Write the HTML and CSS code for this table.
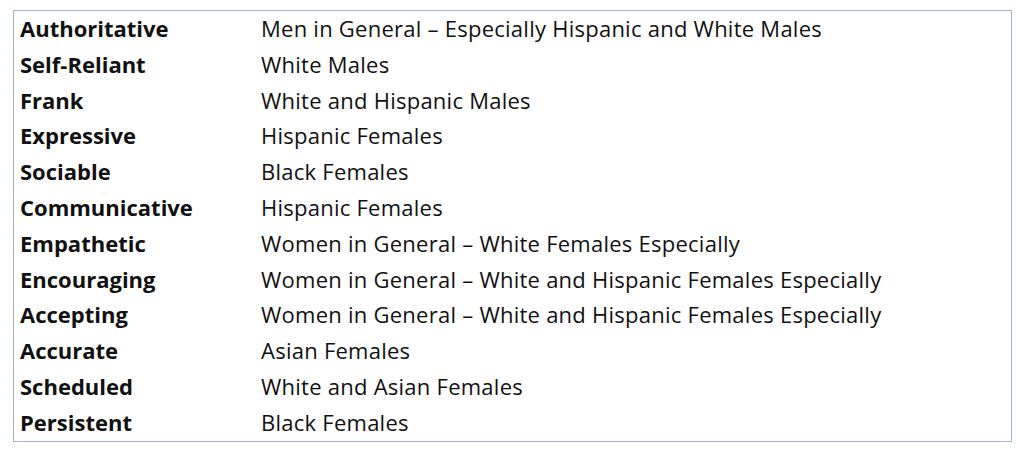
FILE: index.html
```html
<!DOCTYPE html>
<html>
<head>
<meta charset="utf-8">
<link rel="stylesheet" href="styles.css">
</head>
<body>
<div class="page">
  <div class="table">
    <div class="row"><div class="term">Authoritative</div><div class="desc">Men in General – Especially Hispanic and White Males</div></div>
    <div class="row"><div class="term">Self-Reliant</div><div class="desc">White Males</div></div>
    <div class="row"><div class="term">Frank</div><div class="desc">White and Hispanic Males</div></div>
    <div class="row"><div class="term">Expressive</div><div class="desc">Hispanic Females</div></div>
    <div class="row"><div class="term">Sociable</div><div class="desc">Black Females</div></div>
    <div class="row"><div class="term">Communicative</div><div class="desc">Hispanic Females</div></div>
    <div class="row"><div class="term">Empathetic</div><div class="desc">Women in General – White Females Especially</div></div>
    <div class="row"><div class="term">Encouraging</div><div class="desc">Women in General – White and Hispanic Females Especially</div></div>
    <div class="row"><div class="term">Accepting</div><div class="desc">Women in General – White and Hispanic Females Especially</div></div>
    <div class="row"><div class="term">Accurate</div><div class="desc">Asian Females</div></div>
    <div class="row"><div class="term">Scheduled</div><div class="desc">White and Asian Females</div></div>
    <div class="row"><div class="term">Persistent</div><div class="desc">Black Females</div></div>
  </div>
</div>
</body>
</html>
```
FILE: styles.css
```css
html, body {
  margin: 0;
  padding: 0;
  background: #ffffff;
}
.page {
  padding: 10px 5px 0 13px;
}
.table {
  width: 997px;
  border: 1px solid #9fb3c9;
  font-family: "Open Sans", "Noto Sans", sans-serif;
  font-size: 22px;
  line-height: 35.8px;
  color: #111111;
}
.row {
  display: grid;
  grid-template-columns: 241px 1fr;
}
.term {
  padding-left: 6px;
  font-weight: 700;
}
.desc {
  padding-left: 6px;
  letter-spacing: 0.25px;
}
```
